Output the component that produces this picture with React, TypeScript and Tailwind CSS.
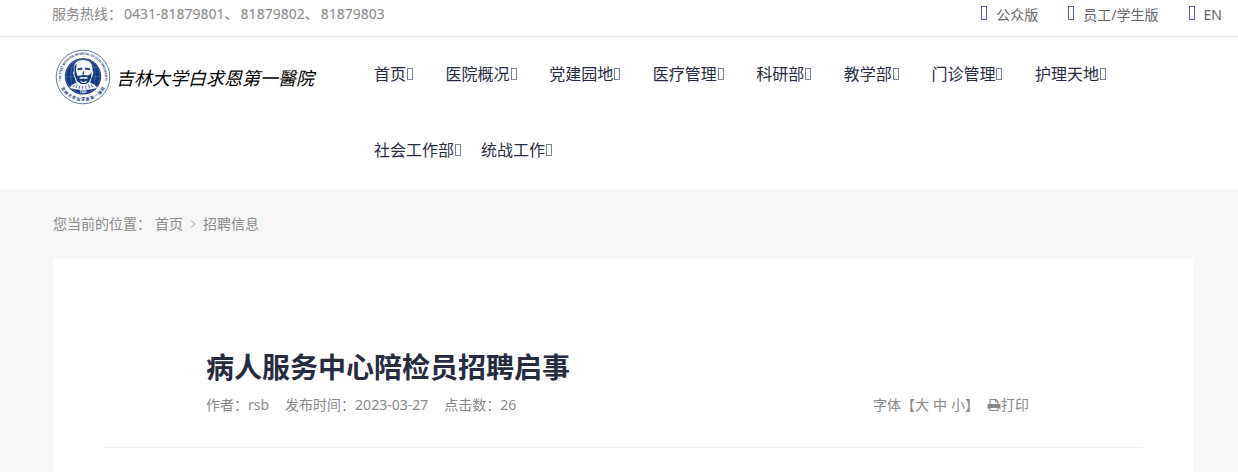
const mainNav = ["首页", "医院概况", "党建园地", "医疗管理", "科研部", "教学部", "门诊管理", "护理天地"]
const moreNav = ["社会工作部", "统战工作"]
const topLinks = ["公众版", "员工/学生版", "EN"]

function Seal() {
  return (
    <svg viewBox="0 0 56 56" className="size-14 shrink-0" aria-hidden="true">
      <defs>
        <path id="ringTop" d="M8.5 38 A22 22 0 1 1 47.5 38" />
        <path id="ringBottom" d="M3.5 32 A25 25 0 0 0 52.5 32" />
      </defs>
      <circle cx="28" cy="28" r="26.8" fill="#fff" stroke="#4c6c9f" strokeWidth="0.9" />
      <circle cx="28" cy="27.4" r="18.2" fill="#12387d" />
      <g fill="none" stroke="#5f80b4" strokeWidth="0.5">
        <circle cx="28" cy="27.4" r="17" />
        <path d="M10 27.6H46M28 10V45M13 17Q28 25 43 17M13 38Q28 30 43 38M20 11Q11 27 20 43M36 11Q45 27 36 43" />
      </g>
      {/* portrait */}
      <path d="M19 21C18 14 22 11 28 11C35 11 38 15 37.5 21L38.5 24L36.5 29C36 34 33 37 28.5 37C23 37 20.5 34 19.8 29L18 24Z" fill="#f4f7fb" />
      <path d="M19.5 17L21.5 14.5L21 22L22.5 27L26 26.5L28.5 25.8L31.5 26.5L34.5 26L36.5 23L36 29L34 33L31 35L26 35L22 32L19.5 26Z" fill="#12387d" />
      <path d="M22.5 19.5L27 18.5L27.4 20.5L23 21.2ZM30 18.6L35 19.5V21.2L30.2 20.6ZM28.2 21.5L29.2 25L27.2 25.4Z" fill="#12387d" />
      <path d="M24 29L27 27.7L28.5 28.3L30.5 27.7L33.5 29L31 30L28.5 29.5L26 30ZM24.5 31.5L28.5 33L32.5 31.5L30.5 34H27Z" fill="#f4f7fb" />
      <path d="M14.5 39C17 35 21 33.8 22.5 33.5Q28 37.5 34.5 33.5C37 34 41 36 42 39Q28 43 14.5 39Z" fill="#f4f7fb" />
      <path d="M18 38L20 35.5M21 39L22.3 35.5M24 39.8L24.8 36.5M27.5 40V37M31 39.8L30.7 36.8M34.5 39.2L33.5 35.5M38 38.5L36 35.5" stroke="#12387d" strokeWidth="0.7" />
      <text x="28" y="44.4" textAnchor="middle" fill="#fff" className="font-['Noto_Sans'] text-[3px] font-bold">1949</text>
      <text fill="#12387d" className="font-['Noto_Sans'] text-[3px] font-bold">
        <textPath href="#ringTop" startOffset="50%" textAnchor="middle">THE FIRST BETHUNE HOSPITAL OF JILIN UNIVERSITY</textPath>
      </text>
      <text fill="#12387d" className="font-['Noto_Sans_CJK_TC'] text-[4px] font-bold">
        <textPath href="#ringBottom" startOffset="50%" textAnchor="middle">吉 林 大 学 白 求 恩 第 一 醫 院</textPath>
      </text>
    </svg>
  )
}

function PrintIcon() {
  return (
    <svg viewBox="0 0 14 14" className="size-[14px]" fill="none" stroke="currentColor" aria-hidden="true">
      <path d="M3 7V1.5H9L11 3.5V7" strokeWidth="1.1" />
      <path d="M8.5 1.5V4H11" />
      <path d="M1.5 6H12.5Q13.5 6 13.5 7V10.5H0.5V7Q0.5 6 1.5 6Z" fill="currentColor" stroke="none" />
      <path d="M3 9.5H11V12.5H3Z" className="fill-white" strokeWidth="1.1" />
    </svg>
  )
}

function NavItem({ label }: { label: string }) {
  return (
    <a href="#" className="flex items-center gap-px pb-[2px] whitespace-nowrap">
      {label}
      <span className="h-3 w-[6px] border border-[#7c7f9c]" />
    </a>
  )
}

export default function App() {
  return (
    <div className="min-h-screen bg-[#f7f7f7] font-['Noto_Sans','Noto_Sans_CJK_SC',sans-serif] text-sm text-[#888]">
      <div className="flex h-[37px] items-start justify-between border-b border-[#e8e8e8] bg-white pr-4 pl-[52px]">
        <p className="flex gap-[2px] leading-7">
          <span>服务热线：</span>
          <span>0431-81879801、</span>
          <span>81879802、</span>
          <span>81879803</span>
        </p>
        <div className="flex gap-[30px] text-[#666]">
          {topLinks.map(label => (
            <a key={label} href="#" className="flex items-center gap-[9px] leading-[30px]">
              <span className="mb-1 h-[14px] w-[6px] border border-[#5a5fa5]" />
              {label}
            </a>
          ))}
        </div>
      </div>

      <header className="flex bg-white pr-[45px] pl-[55px]">
        <a href="#" className="flex h-20 w-[319px] shrink-0 items-center gap-[5px]">
          <Seal />
          <span className="font-['Noto_Sans_CJK_TC',sans-serif] text-lg whitespace-nowrap text-black italic">吉林大学白求恩第一醫院</span>
        </a>
        <nav className="text-base leading-[74px] text-[#272b3f]">
          <div className="flex w-[732px] justify-between">
            {mainNav.map(label => <NavItem key={label} label={label} />)}
          </div>
          <div className="flex gap-5">
            {moreNav.map(label => <NavItem key={label} label={label} />)}
          </div>
        </nav>
      </header>

      <main className="pr-[45px] pl-[53px]">
        <div className="flex h-[70px] items-center">
          <span>您当前的位置：</span>
          <a href="#" className="ml-1">首页</a>
          <svg viewBox="0 0 6 10" className="mx-[7px] h-[10px] w-[6px]" fill="none" stroke="#aaa">
            <path d="M1 1.5L5 5L1 8.5" />
          </svg>
          <a href="#">招聘信息</a>
        </div>
        <article className="bg-white pt-20 pr-[50px] pb-6 pl-[51px]">
          <div className="border-b border-[#f2f2f2] pr-[114px] pb-8 pl-[102px]">
            <h1 className="text-[28px] leading-14 font-bold text-[#272b3f]">病人服务中心陪检员招聘启事</h1>
            <div className="flex justify-between leading-5">
              <p className="flex gap-4">
                <span>作者：rsb</span>
                <span>发布时间：2023-03-27</span>
                <span>点击数：26</span>
              </p>
              <div className="flex items-center">
                <span>字体【</span>
                <span className="flex gap-1">
                  <button>大</button>
                  <button>中</button>
                  <button>小</button>
                </span>
                <span>】</span>
                <button className="ml-2 flex items-center">
                  <PrintIcon />
                  打印
                </button>
              </div>
            </div>
          </div>
        </article>
      </main>
    </div>
  )
}
